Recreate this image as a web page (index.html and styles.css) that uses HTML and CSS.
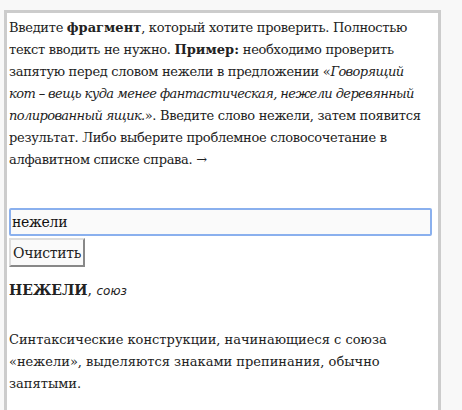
FILE: index.html
```html
<!DOCTYPE html>
<html lang="ru">
<head>
<meta charset="utf-8">
<title>Нежели</title>
<link rel="stylesheet" href="styles.css">
</head>
<body>
<div class="box">
  <p class="intro">Введите <b>фрагмент</b>, который хотите проверить. Полностью текст вводить не нужно. <b>Пример:</b> необходимо проверить запятую перед словом нежели в предложении «<i class="quote">Говорящий кот&nbsp;– вещь куда менее фантастическая, нежели деревянный полированный ящик.</i>». Введите слово нежели, затем появится результат. Либо выберите проблемное словосочетание в алфавитном списке справа. →</p>
  <div class="form">
    <input class="query" type="text" value="нежели">
    <button class="clear" type="button">Очистить</button>
  </div>
  <p class="head"><b>НЕЖЕЛИ</b>, <i class="pos">союз</i></p>
  <p class="rule">Синтаксические конструкции, начинающиеся с союза «нежели», выделяются знаками препинания, обычно запятыми.</p>
</div>
</body>
</html>
```

FILE: styles.css
```css
html, body {
  margin: 0;
  padding: 0;
  background: #f8f8f8;
}
body {
  font-family: "DejaVu Serif", serif;
  font-size: 13px;
  line-height: 22px;
  color: #222;
}
.box {
  margin: 10px 0 0 4px;
  width: 431px;
  height: 420px;
  border: 3px solid #cccccc;
  border-bottom: none;
  background: #ffffff;
  padding: 4px 0 0 0;
  box-sizing: content-box;
}
.intro {
  margin: 0;
  padding: 0 0 0 2px;
  letter-spacing: -0.3px;
}
.intro b {
  letter-spacing: 0;
}
.quote {
  letter-spacing: -0.6px;
}
.form {
  margin-top: 37px;
  padding-left: 2px;
}
.query {
  display: block;
  box-sizing: border-box;
  width: 423px;
  height: 28px;
  margin: 0;
  padding: 0 1px;
  font-family: "DejaVu Serif", serif;
  font-size: 14px;
  letter-spacing: -0.3px;
  color: #111;
  background: #fafafa;
  border: 2px solid #8ab0ee;
  border-radius: 2px;
  outline: none;
}
.clear {
  display: block;
  box-sizing: border-box;
  width: 76px;
  margin: 2px 0 0 0;
  height: 29px;
  padding: 0;
  font-family: "DejaVu Serif", serif;
  font-size: 14px;
  letter-spacing: -0.3px;
  color: #222;
  background: #fafafa;
  border: 2px solid;
  border-color: #dddddd #888888 #888888 #dddddd;
  border-radius: 0;
}
.head {
  margin: 12px 0 0 0;
  padding-left: 2px;
  font-size: 14px;
}
.head b {
  font-weight: bold;
}
.pos {
  font-family: "DejaVu Sans", sans-serif;
  font-size: 12px;
}
.rule {
  margin: 27px 0 0 0;
  padding-left: 2px;
  padding-right: 20px;
}
```
